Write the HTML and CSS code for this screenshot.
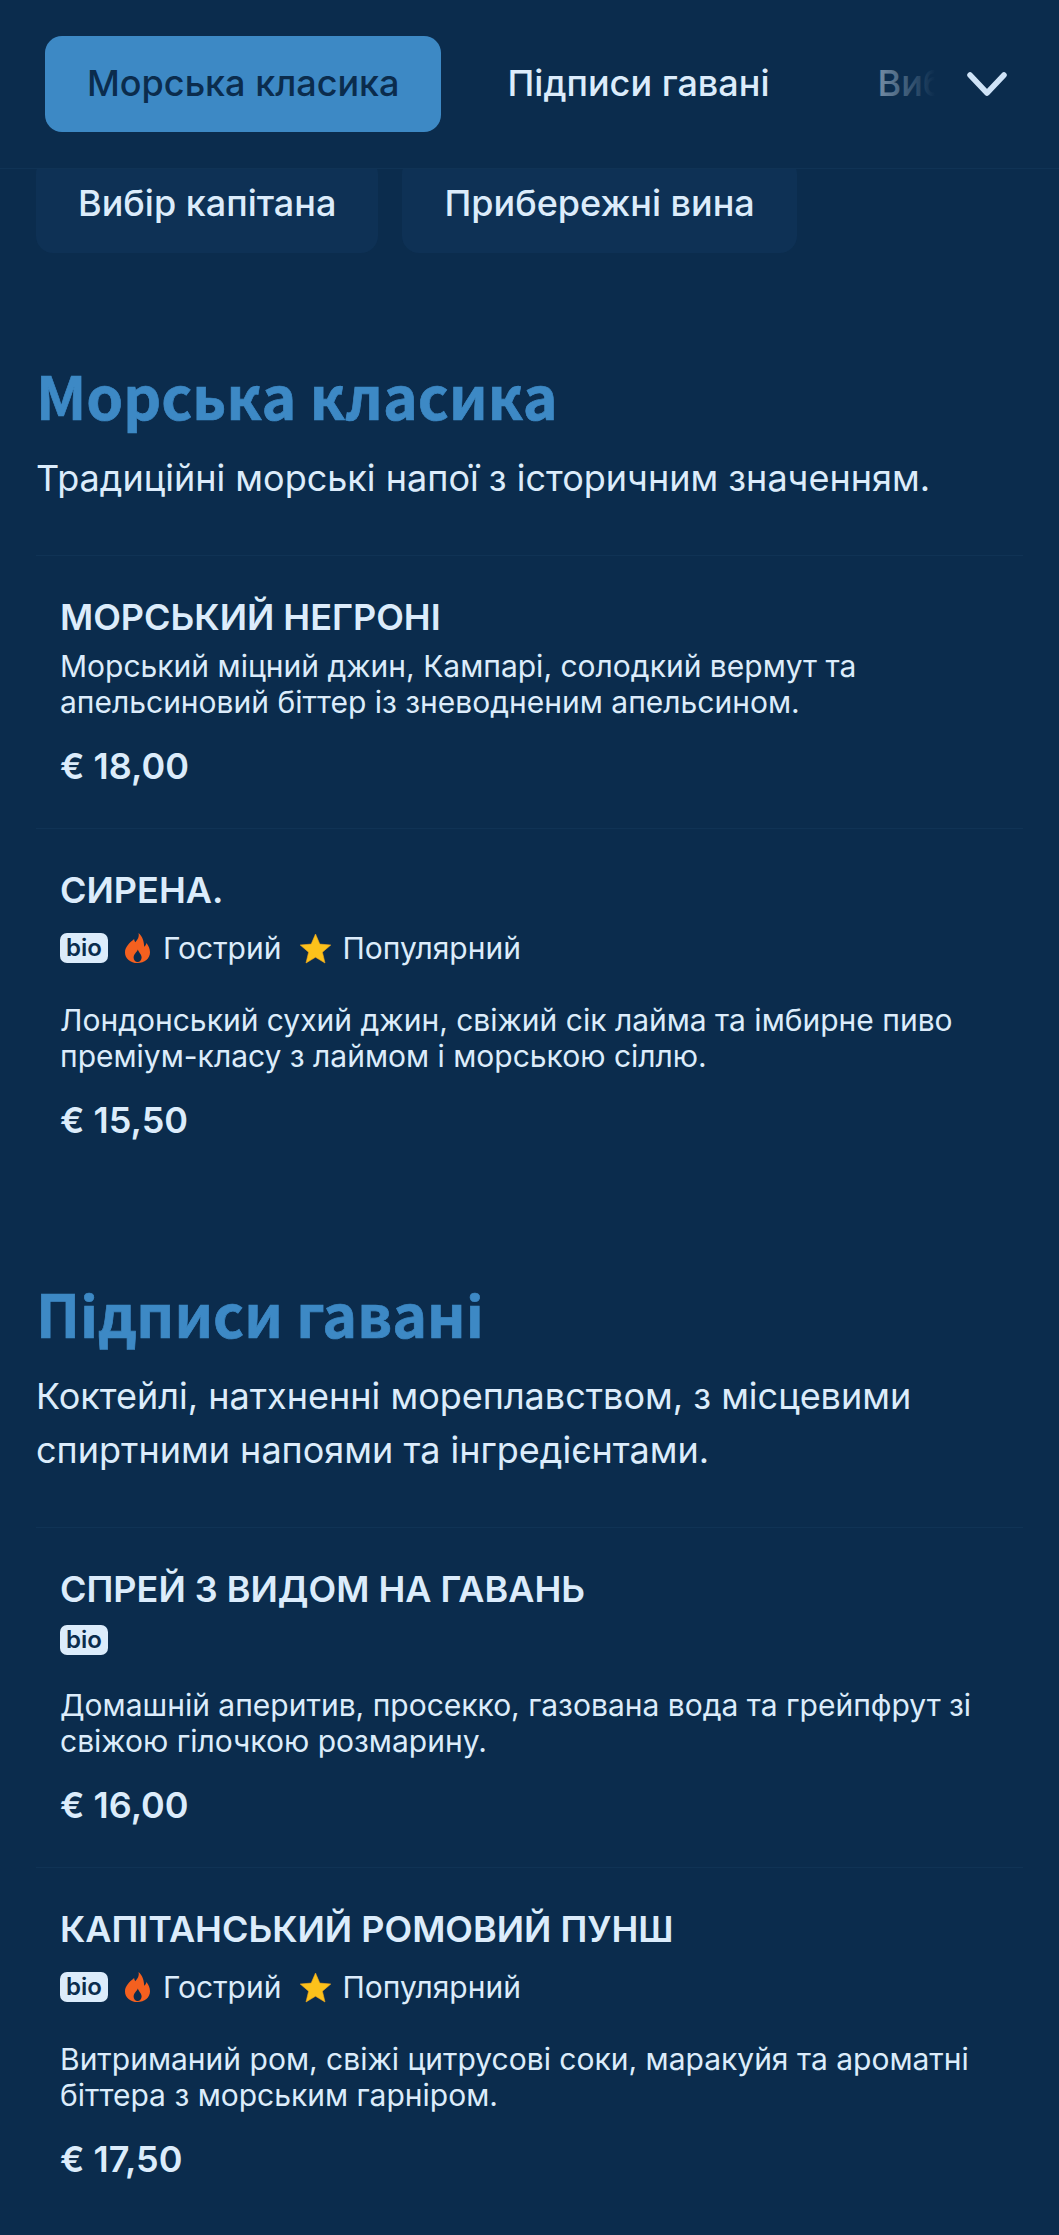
FILE: index.html
```html
<!DOCTYPE html>
<html lang="uk">
<head>
<meta charset="utf-8">
<title>Меню</title>
<link rel="stylesheet" href="styles.css">
</head>
<body>
<svg class="defs" width="0" height="0" aria-hidden="true">
  <symbol id="flame" viewBox="0 0 25 30">
    <path d="M13.500 0c1 4.200-1 6.600-3.200 9.200-.7-1-1.100-2-1.200-3.200C4.800 9.600 0 13.800 0 19.400 0 25.400 5.400 30 12.500 30S25 25.400 25 19.200c0-3.500-1.500-6.600-3.700-9.200-.2 1.600-.9 2.900-2.100 3.800C19 8.200 17.400 3.200 13.500 0z" fill="#f4601f"/>
    <path d="M12.800 16.500c-.4 2.200-4.200 4.300-4.200 8 0 2.700 1.800 4.500 4 4.500s4-1.800 4-4.500c0-3.200-2.900-5.100-3.800-8z" fill="#0b2c4d"/>
  </symbol>
  <symbol id="star" viewBox="0 0 31 31">
    <path d="M15.500 1l4.300 10.100 11 .9-8.400 7.200 2.600 10.800-9.500-5.800-9.500 5.800 2.600-10.800L.2 12l11-.9z" fill="#fcc21b" stroke="#f5a81c" stroke-width=".6" stroke-linejoin="round"/>
  </symbol>
</svg>

<header class="topbar">
  <nav class="tabs">
    <a class="tab tab-active">Морська класика</a>
    <a class="tab">Підписи гавані</a>
    <a class="tab">Вибір капітана</a>
  </nav>
  <div class="fade"></div>
  <svg class="chevron" viewBox="0 0 40 24" width="40" height="24" aria-hidden="true">
    <path d="M3 3l17 18L37 3" fill="none" stroke="#cfe3f7" stroke-width="5.500" stroke-linecap="round" stroke-linejoin="round"/>
  </svg>
</header>

<main class="page">
  <div class="chips">
    <a class="chip">Вибір капітана</a>
    <a class="chip">Прибережні вина</a>
  </div>

  <section class="section first">
    <h2 class="section-title">Морська класика</h2>
    <p class="section-desc">Традиційні морські напої з історичним значенням.</p>
    <article class="item">
      <h3 class="item-name">МОРСЬКИЙ НЕГРОНІ</h3>
      <p class="item-desc">Морський міцний джин, Кампарі, солодкий вермут та апельсиновий біттер із зневодненим апельсином.</p>
      <div class="price">€ 18,00</div>
    </article>
    <article class="item">
      <h3 class="item-name">СИРЕНА.</h3>
      <div class="tags">
        <span class="bio">bio</span>
        <span class="tag"><svg class="flame"><use href="#flame"/></svg>Гострий</span>
        <span class="tag"><svg class="star"><use href="#star"/></svg>Популярний</span>
      </div>
      <p class="item-desc">Лондонський сухий джин, свіжий сік лайма та імбирне пиво преміум-класу з лаймом і морською сіллю.</p>
      <div class="price">€ 15,50</div>
    </article>
  </section>

  <section class="section">
    <h2 class="section-title">Підписи гавані</h2>
    <p class="section-desc">Коктейлі, натхненні мореплавством, з місцевими спиртними напоями та інгредієнтами.</p>
    <article class="item">
      <h3 class="item-name">СПРЕЙ З ВИДОМ НА ГАВАНЬ</h3>
      <div class="tags">
        <span class="bio">bio</span>
      </div>
      <p class="item-desc">Домашній аперитив, просекко, газована вода та грейпфрут зі свіжою гілочкою розмарину.</p>
      <div class="price">€ 16,00</div>
    </article>
    <article class="item">
      <h3 class="item-name">КАПІТАНСЬКИЙ РОМОВИЙ ПУНШ</h3>
      <div class="tags">
        <span class="bio">bio</span>
        <span class="tag"><svg class="flame"><use href="#flame"/></svg>Гострий</span>
        <span class="tag"><svg class="star"><use href="#star"/></svg>Популярний</span>
      </div>
      <p class="item-desc">Витриманий ром, свіжі цитрусові соки, маракуйя та ароматні біттера з морським гарніром.</p>
      <div class="price">€ 17,50</div>
    </article>
  </section>
</main>
</body>
</html>
```
FILE: styles.css
```css
* { box-sizing: border-box; }
html, body { margin: 0; padding: 0; }
body {
  width: 1059px;
  height: 2235px;
  overflow: hidden;
  background: #0b2c4d;
  color: #dcecfb;
  font-family: Inter, "Noto Sans", sans-serif;
  position: relative;
}
.defs { position: absolute; }

.topbar {
  position: absolute;
  top: 0; left: 0; right: 0;
  height: 169px;
  background: #0b2c4d;
  border-bottom: 1px solid #103355;
  z-index: 2;
  overflow: hidden;
}
.tabs {
  display: flex;
  gap: 25px;
  padding: 36px 0 0 45px;
  width: 1059px;
}
.tab {
  flex: none;
  height: 96px;
  padding: 0 41px 2px 42px;
  display: flex;
  align-items: center;
  font-size: 36px;
  font-weight: 500;
  color: #dcecfb;
  border-radius: 17px;
}
.tab-active {
  background: #3d89c5;
  color: #0b2c4d;
}
.fade {
  position: absolute;
  top: 36px; bottom: 0; left: 850px; right: 0;
  background: linear-gradient(to right, rgba(11,44,77,0.25) 0, #0b2c4d 85px);
}
.chevron {
  position: absolute;
  left: 967px;
  top: 72px;
}

.page { padding: 157px 36px 0; }
.chips { display: flex; gap: 24px; }
.chip {
  height: 96px;
  padding: 0 42px 4px;
  display: flex;
  align-items: center;
  font-size: 36px;
  font-weight: 500;
  color: #dcecfb;
  background: #0e3155;
  border-radius: 17px;
}

.section { margin-top: 96px; }
.section.first { margin-top: 107px; }
.section-title {
  margin: 0;
  font-family: "Noto Sans CJK SC", "Noto Sans", sans-serif;
  font-size: 59px;
  line-height: 70px;
  font-weight: 700;
  -webkit-text-stroke: 0.7px #3d89c5;
  color: #3d89c5;
}
.section-desc {
  margin: 21px 0 50px;
  font-size: 36px;
  line-height: 54px;
  color: #dcecfb;
}
.item {
  padding: 37px 24px 38px;
  border-top: 1px solid #103355;
}
.item-name {
  margin: 0 0 7px;
  font-size: 36px;
  line-height: 48px;
  font-weight: 600;
}
.item-desc {
  margin: 0;
  font-size: 30px;
  line-height: 36px;
}
.tags {
  display: flex;
  align-items: center;
  gap: 17px;
  margin: 12px 0 32px;
}
.bio {
  width: 48px;
  height: 30px;
  background: #dcecfb;
  color: #0b2c4d;
  border-radius: 7px;
  font-size: 24px;
  font-weight: 600;
  text-align: center;
  line-height: 30px;
}
.tag {
  display: flex;
  align-items: center;
  height: 44px;
  font-size: 30px;
}
.tag + .tag { margin-left: 2px; }
.flame { width: 25px; height: 30px; margin-right: 13px; }
.star { width: 31px; height: 31px; margin-right: 11px; }
.price {
  margin-top: 22px;
  font-size: 36px;
  line-height: 48px;
  font-weight: 600;
}
```
